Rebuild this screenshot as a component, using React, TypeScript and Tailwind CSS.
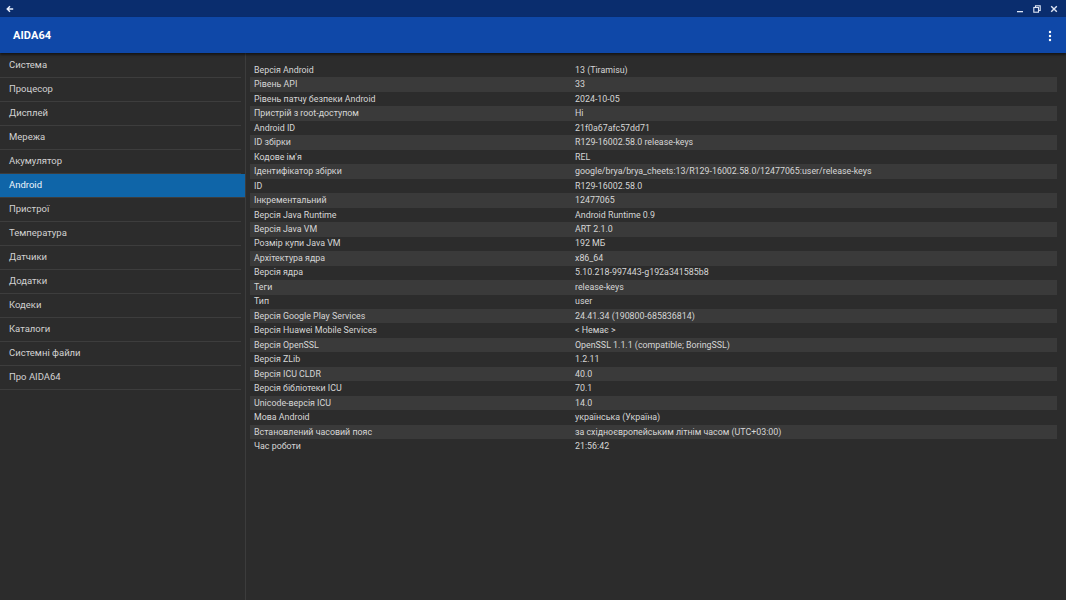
import React from "react";

const menu = [
  "Система",
  "Процесор",
  "Дисплей",
  "Мережа",
  "Акумулятор",
  "Android",
  "Пристрої",
  "Температура",
  "Датчики",
  "Додатки",
  "Кодеки",
  "Каталоги",
  "Системні файли",
  "Про AIDA64",
];

const rows: [string, string][] = [
  ["Версія Android", "13 (Tiramisu)"],
  ["Рівень API", "33"],
  ["Рівень патчу безпеки Android", "2024-10-05"],
  ["Пристрій з root-доступом", "Ні"],
  ["Android ID", "21f0a67afc57dd71"],
  ["ID збірки", "R129-16002.58.0 release-keys"],
  ["Кодове ім'я", "REL"],
  ["Ідентифікатор збірки", "google/brya/brya_cheets:13/R129-16002.58.0/12477065:user/release-keys"],
  ["ID", "R129-16002.58.0"],
  ["Інкрементальний", "12477065"],
  ["Версія Java Runtime", "Android Runtime 0.9"],
  ["Версія Java VM", "ART 2.1.0"],
  ["Розмір купи Java VM", "192 МБ"],
  ["Архітектура ядра", "x86_64"],
  ["Версія ядра", "5.10.218-997443-g192a341585b8"],
  ["Теги", "release-keys"],
  ["Тип", "user"],
  ["Версія Google Play Services", "24.41.34 (190800-685836814)"],
  ["Версія Huawei Mobile Services", "< Немає >"],
  ["Версія OpenSSL", "OpenSSL 1.1.1 (compatible; BoringSSL)"],
  ["Версія ZLib", "1.2.11"],
  ["Версія ICU CLDR", "40.0"],
  ["Версія бібліотеки ICU", "70.1"],
  ["Unicode-версія ICU", "14.0"],
  ["Мова Android", "українська (Україна)"],
  ["Встановлений часовий пояс", "за східноєвропейським літнім часом (UTC+03:00)"],
  ["Час роботи", "21:56:42"],
];

export default function App() {
  return (
    <div
      className="w-[1066px] h-[600px] overflow-hidden flex flex-col bg-[#2c2c2c] text-[#d6d6d6]"
      style={{ fontFamily: "Roboto, 'Noto Sans', sans-serif" }}
    >
      {/* title bar */}
      <div className="h-[17px] bg-[#0a2d6e] flex items-center justify-between px-[5px] shrink-0">
        <svg width="8" height="8" viewBox="0 0 10 10" className="ml-[1px]">
          <path d="M9 5H2M5 1.5L1.5 5L5 8.5" stroke="#e8eefc" strokeWidth="1.8" fill="none" />
        </svg>
        <div className="flex items-center gap-[9px] mr-[3px]">
          <svg width="8" height="8" viewBox="0 0 8 8">
            <rect x="1" y="6" width="6" height="1.3" fill="#dfe6f5" />
          </svg>
          <svg width="8" height="8" viewBox="0 0 8 8">
            <rect x="2.5" y="0.8" width="4.7" height="4.7" fill="none" stroke="#dfe6f5" strokeWidth="1.1" />
            <rect x="0.8" y="2.5" width="4.7" height="4.7" fill="#0a2d6e" stroke="#dfe6f5" strokeWidth="1.1" />
          </svg>
          <svg width="8" height="8" viewBox="0 0 8 8">
            <path d="M1.2 1.2L6.8 6.8M6.8 1.2L1.2 6.8" stroke="#dfe6f5" strokeWidth="1.4" />
          </svg>
        </div>
      </div>
      {/* app bar */}
      <div className="h-[36px] bg-[#0f48a8] flex items-center justify-between pl-[13px] pr-[14px] pt-[2px] shrink-0 shadow-[0_2px_2px_rgba(0,0,0,0.5)] relative z-10">
        <span className="text-white font-bold text-[11px] tracking-[0.1px]">AIDA64</span>
        <svg width="4" height="12" viewBox="0 0 4 12">
          <circle cx="2" cy="2" r="1.2" fill="#fff" />
          <circle cx="2" cy="6" r="1.2" fill="#fff" />
          <circle cx="2" cy="10" r="1.2" fill="#fff" />
        </svg>
      </div>
      <div className="flex flex-1 min-h-0">
        {/* sidebar */}
        <div className="w-[246px] border-r border-[#3c3c3c] pt-[1px] shrink-0 bg-[#2c2c2c]">
          {menu.map((m) =>
            m === "Android" ? (
              <div
                key={m}
                className="h-[24px] flex items-center pl-[9px] text-[9.5px] border-b border-[#3d3d3d] bg-[#0f65a8] text-[#eef4fb]"
              >
                {m}
              </div>
            ) : (
              <div
                key={m}
                className="h-[24px] flex items-center pl-[9px] text-[9.5px] mr-[4px] border-b border-[#3d3d3d] text-[#d2d2d2]"
              >
                {m}
              </div>
            )
          )}
        </div>
        {/* table */}
        <div className="flex-1 pl-[4px] pr-[9px] pt-[10px]">
          {rows.map(([k, v], i) => (
            <div
              key={i}
              className={`h-[14.47px] flex items-center text-[8.85px] leading-none ${
                i % 2 === 1 ? "bg-[#3a3a3a]" : ""
              }`}
            >
              <div className="w-[325px] pl-[4px] shrink-0 whitespace-nowrap">{k}</div>
              <div className="whitespace-nowrap">{v}</div>
            </div>
          ))}
        </div>
      </div>
    </div>
  );
}
